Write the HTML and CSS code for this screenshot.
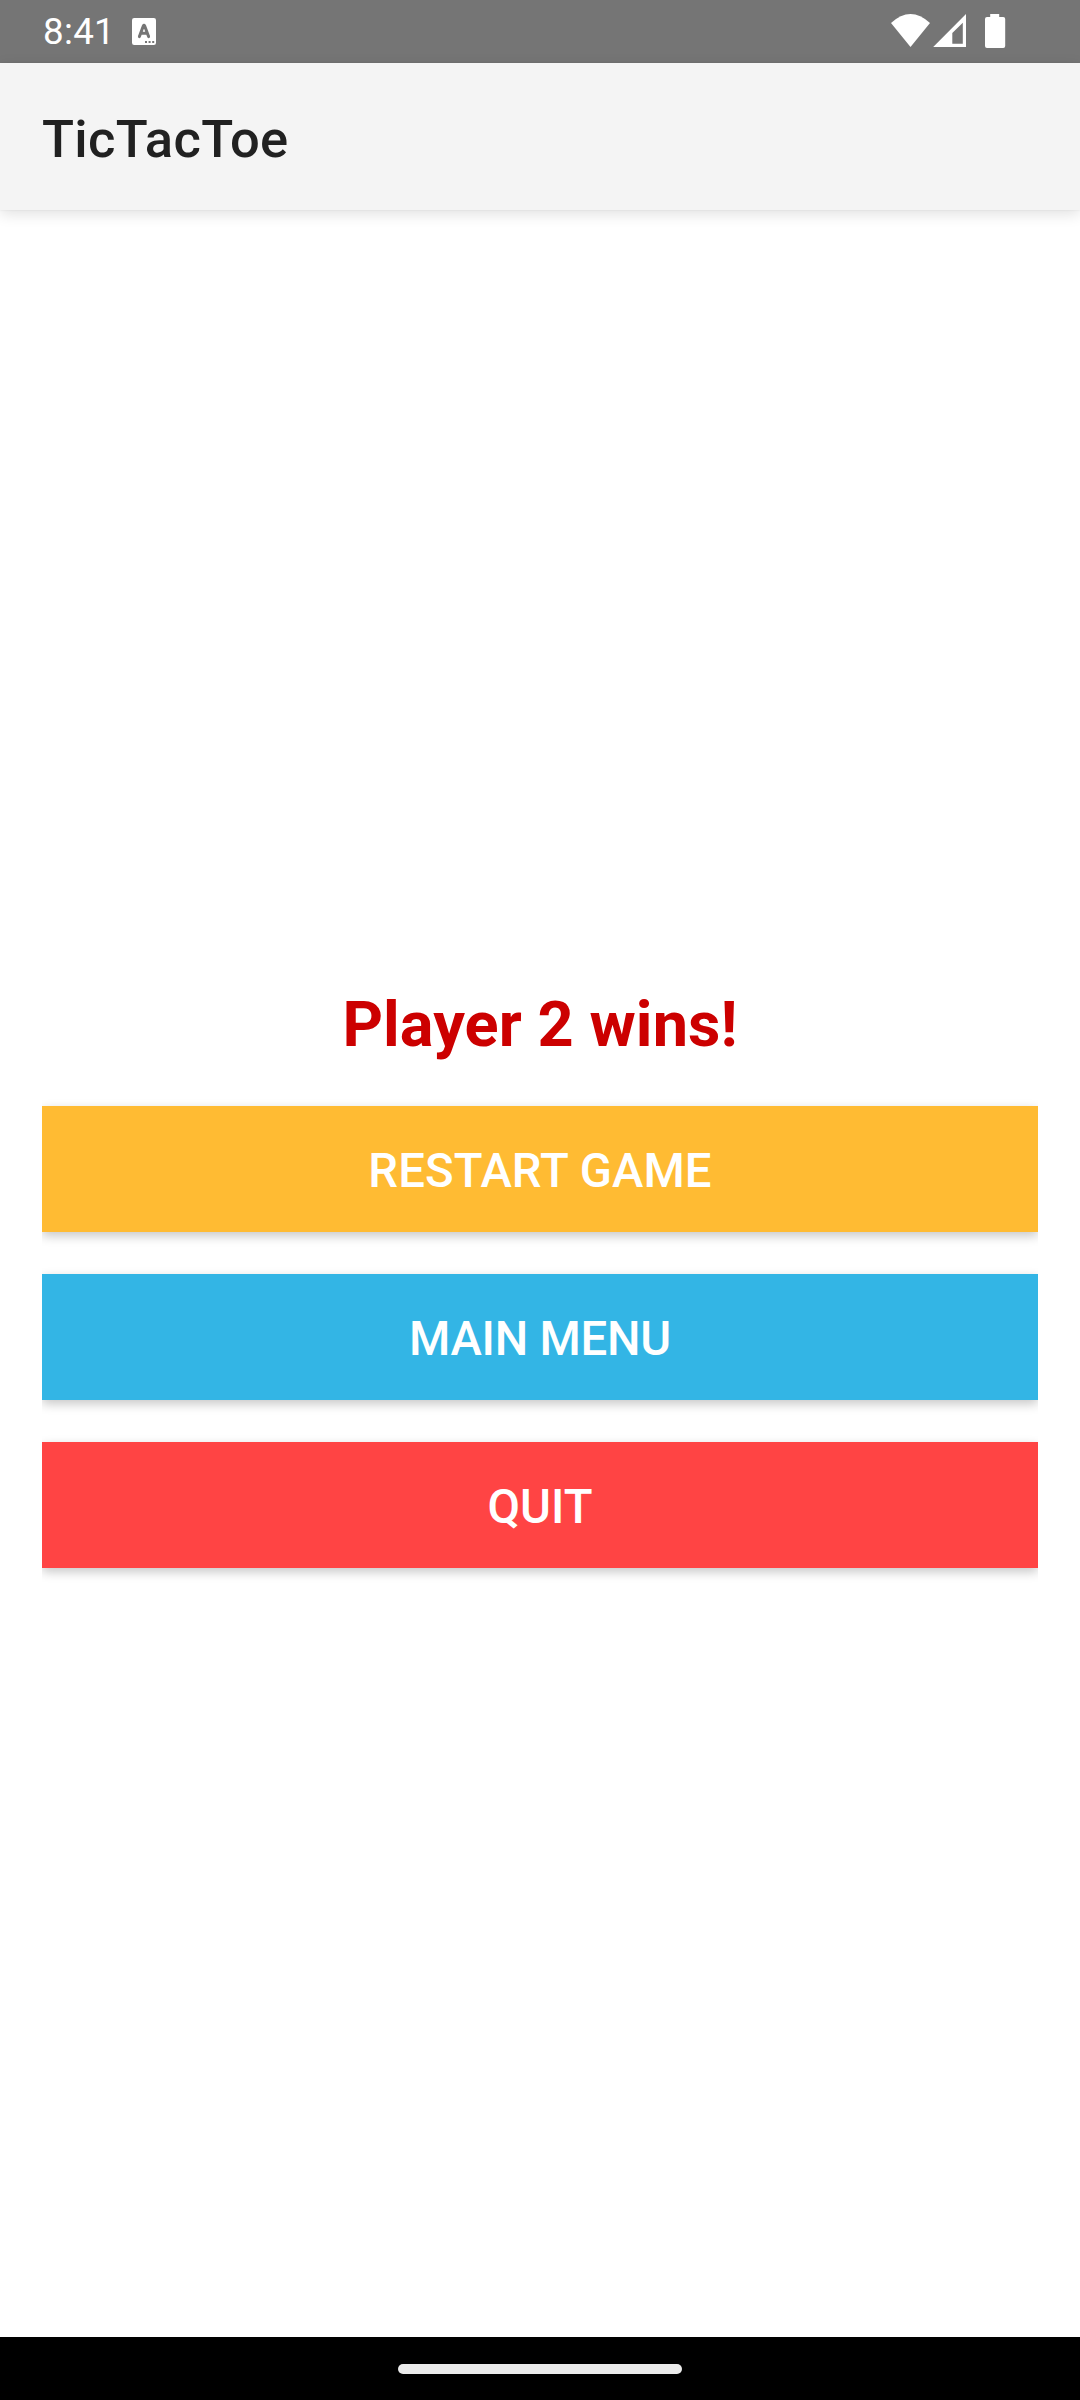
FILE: index.html
```html
<!DOCTYPE html>
<html lang="en">
<head>
<meta charset="utf-8">
<title>TicTacToe</title>
<link rel="stylesheet" href="styles.css">
</head>
<body>
<div class="screen">
  <div class="status-bar">
    <span class="clock">8:41</span>
    <svg class="keyboard-icon" width="24" height="27" viewBox="0 0 24 27" aria-hidden="true">
      <rect width="24" height="27" rx="2.2" fill="#fff"/>
      <path d="M7.4 18.6L11.4 7.8Q12 6.6 12.6 7.8L16.6 18.6M9.2 15.2H14.8" fill="none" stroke="#757575" stroke-width="3" stroke-linecap="round" stroke-linejoin="round"/>
      <path d="M13 23h2v2h-2zM16.6 23h2v2h-2zM20.2 23h2v2h-2z" fill="#757575"/>
    </svg>
    <svg class="system-icons" width="116" height="36" viewBox="0 0 116 36" aria-hidden="true">
      <path d="M0 9Q19.5-9 39 9L19.5 33Z" fill="#fff"/>
      <path fill-rule="evenodd" d="M42.2 33L75 0V33ZM61.3 29.8H71.8V8.7L61.3 19Z" fill="#fff"/>
      <path d="M99.2 0h9v3h4q2 0 2 2v27q0 2-2 2H96q-2 0-2-2V5q0-2 2-2h3.2z" fill="#fff"/>
    </svg>
  </div>
  <header class="app-bar"><h1 class="app-title">TicTacToe</h1></header>
  <main class="content">
    <p class="result">Player 2 wins!</p>
    <button class="button restart">RESTART GAME</button>
    <button class="button menu">MAIN MENU</button>
    <button class="button quit">QUIT</button>
  </main>
  <div class="nav-bar"><div class="handle"></div></div>
</div>
</body>
</html>
```
FILE: styles.css
```css
* { box-sizing: border-box; }
body { margin: 0; font-family: Roboto, sans-serif; background: #fff; }
.screen { display: flex; flex-direction: column; width: 1080px; height: 2400px; }
.status-bar {
  display: flex; align-items: flex-start; flex: none; height: 63px;
  padding: 0 73px 0 43px; background: #757575; color: #fff;
}
.clock { width: 89px; font-size: 36.75px; line-height: 63px; letter-spacing: .3px; }
.keyboard-icon { margin-top: 18px; }
.system-icons { margin: 14px 0 0 auto; }
.app-bar {
  display: flex; align-items: center; flex: none; height: 147px;
  padding: 4px 42px 0; background: #f4f4f4;
  box-shadow: 0 4px 14px rgba(0, 0, 0, .12), 0 0 2px rgba(0, 0, 0, .08);
}
.app-title { margin: 0; font-size: 52.5px; font-weight: 500; line-height: 70px; letter-spacing: .35px; color: #212121; }
.content {
  display: flex; flex-direction: column; justify-content: center; flex: 1; gap: 42px;
  margin: 0 42px; overflow: hidden;
}
.result {
  height: 85px; margin: 0; padding-top: 6px; text-align: center;
  font-size: 63px; font-weight: 700; line-height: 79px; letter-spacing: .08px; color: #c00;
}
.button {
  height: 126px; padding: 4px 0 0; border: 0; color: #fff;
  font: 500 47.25px/60px Roboto, sans-serif;
  box-shadow: 0 4px 10px rgba(0, 0, 0, .22);
}
.restart { background: #fb3; letter-spacing: .1px; }
.menu { background: #33b5e5; letter-spacing: -.25px; }
.quit { background: #f44; }
.nav-bar { display: flex; justify-content: center; flex: none; height: 63px; padding-top: 27px; background: #000; }
.handle { width: 284px; height: 10px; border-radius: 5px; background: #ebebeb; }
```
